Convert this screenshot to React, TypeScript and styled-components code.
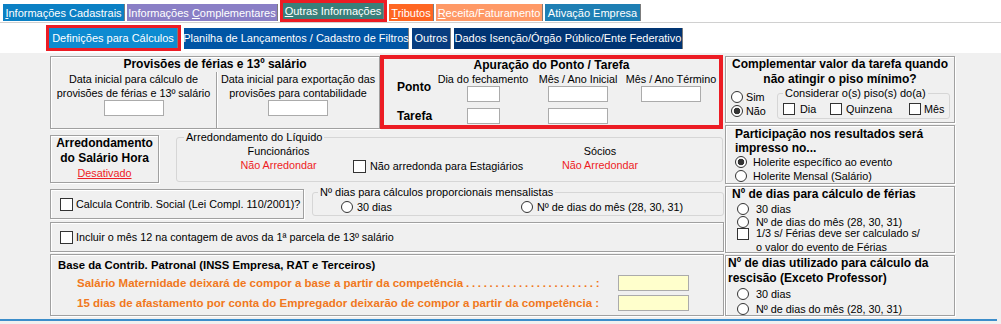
import styled, { createGlobalStyle } from 'styled-components';

const GlobalStyle = createGlobalStyle`
  html, body {
    margin: 0;
    padding: 0;
  }
  body {
    background: #f0f0f0;
    font-family: 'Liberation Sans', Arial, sans-serif;
    font-size: 10.8px;
    color: #000;
  }
`;

const Page = styled.div`
  width: 1001px;
  height: 324px;
  overflow: hidden;
`;

const Header = styled.div`
  height: 53px;
  background: #fff;
`;

const TopTabs = styled.div`
  display: flex;
  align-items: flex-end;
  gap: 2px;
  height: 22px;
  padding-left: 3px;
  border-bottom: 1px solid #d0d0d0;
`;

const SubTabs = styled.div`
  display: flex;
  align-items: center;
  gap: 3px;
  height: 26px;
  margin-top: 2px;
  padding-left: 46px;
`;

const Tab = styled.div<{ $bg: string; $w: number; $h: number; $mb?: number }>`
  box-sizing: border-box;
  flex: none;
  width: ${({ $w }) => $w}px;
  height: ${({ $h }) => $h}px;
  margin-bottom: ${({ $mb }) => $mb ?? 0}px;
  display: flex;
  align-items: center;
  justify-content: center;
  background: ${({ $bg }) => $bg};
  color: #fff;
  font-size: 11px;
  white-space: nowrap;
  border-right: 1px solid #7c7c7c;
`;

const Highlight = styled.div`
  box-sizing: border-box;
  flex: none;
  display: flex;
  border: 3px solid #ec1c24;
`;

const Content = styled.div`
  display: flex;
  gap: 1px;
  margin-top: 2px;
  padding-left: 50px;
`;

const LeftCol = styled.div`
  width: 674px;
  display: flex;
  flex-direction: column;
`;

const RightCol = styled.div`
  width: 230px;
  display: flex;
  flex-direction: column;
  gap: 2px;
  padding-top: 1px;
`;

const Row = styled.div<{ $h: number; $mt?: number }>`
  display: flex;
  align-items: flex-start;
  height: ${({ $h }) => $h}px;
  margin-top: ${({ $mt }) => $mt ?? 0}px;
`;

const Box = styled.div<{ $w?: number; $h: number; $mt?: number; $ml?: number }>`
  box-sizing: border-box;
  flex: none;
  width: ${({ $w }) => ($w ? `${$w}px` : '100%')};
  height: ${({ $h }) => $h}px;
  margin-top: ${({ $mt }) => $mt ?? 0}px;
  margin-left: ${({ $ml }) => $ml ?? 0}px;
  border: 1px solid #a0a0a0;
  box-shadow: inset 1px 1px 0 #fff, 1px 1px 0 #fff;
`;

const InlineBox = styled(Box)`
  display: flex;
  align-items: center;
  padding-left: 9px;
`;

const RedBox = styled.div`
  box-sizing: border-box;
  flex: none;
  width: 343px;
  height: 74px;
  border: 4px solid #ec1c24;
`;

const Group = styled.fieldset<{ $w: number; $h: number; $ml?: number }>`
  box-sizing: border-box;
  flex: none;
  width: ${({ $w }) => $w}px;
  height: ${({ $h }) => $h}px;
  margin: 0 0 0 ${({ $ml }) => $ml ?? 0}px;
  padding: 0;
  min-width: 0;
  border: 1px solid #d6d6d6;
  border-radius: 3px;
`;

const Legend = styled.legend<{ $ml?: number }>`
  margin-left: ${({ $ml }) => $ml ?? 6}px;
  padding: 0 2px;
  font-size: 11px;
  line-height: 13px;
`;

const Title = styled.div<{ $align?: string; $lh?: number; $pl?: number; $size?: number }>`
  font-size: ${({ $size }) => $size ?? 12}px;
  font-weight: bold;
  line-height: ${({ $lh }) => $lh ?? 15}px;
  text-align: ${({ $align }) => $align ?? 'center'};
  padding-left: ${({ $pl }) => $pl ?? 0}px;
  white-space: nowrap;
`;

const Input = styled.div<{ $w: number; $yellow?: boolean }>`
  box-sizing: border-box;
  flex: none;
  width: ${({ $w }) => $w}px;
  height: 16px;
  background: ${({ $yellow }) => ($yellow ? '#ffffcc' : '#fff')};
  border: 1px solid #ababab;
`;

/* Provisões */
const ProvCols = styled.div`
  display: grid;
  grid-template-columns: 165px 1fr;
  height: 56px;
`;

const ProvCol = styled.div<{ $divider?: boolean }>`
  display: flex;
  flex-direction: column;
  align-items: center;
  line-height: 14px;
  white-space: nowrap;
  border-left: ${({ $divider }) => ($divider ? '1px solid #a0a0a0' : 'none')};
  box-shadow: ${({ $divider }) => ($divider ? 'inset 1px 0 0 #fff' : 'none')};
`;

/* Apuração */
const ApurGrid = styled.div`
  display: grid;
  grid-template-columns: 52px 94px 96px 90px;
  grid-template-rows: 14px 16px 22px;
  align-items: center;
  justify-items: center;
`;

const ColHead = styled.div<{ $col: number }>`
  grid-row: 1;
  grid-column: ${({ $col }) => $col};
  line-height: 13px;
  white-space: nowrap;
`;

const RowLabel = styled.div<{ $row: string; $self?: string }>`
  grid-row: ${({ $row }) => $row};
  grid-column: 1;
  justify-self: start;
  align-self: ${({ $self }) => $self ?? 'center'};
  padding-left: 13px;
  font-size: 12px;
  font-weight: bold;
  line-height: 16px;
`;

const Cell = styled.div<{ $row: number; $col: number }>`
  grid-row: ${({ $row }) => $row};
  grid-column: ${({ $col }) => $col};
  align-self: end;
`;

/* Arredondamento */
const RedLink = styled.div<{ $u?: boolean }>`
  color: #ee1c24;
  line-height: 14px;
  text-align: center;
  text-decoration: ${({ $u }) => ($u ? 'underline' : 'none')};
  white-space: nowrap;
`;

const LiqRow = styled.div`
  display: flex;
  align-items: flex-start;
`;

const LiqItem = styled.div<{ $w: number; $ml?: number; $mt?: number }>`
  width: ${({ $w }) => $w}px;
  margin-left: ${({ $ml }) => $ml ?? 0}px;
  margin-top: ${({ $mt }) => $mt ?? 0}px;
  line-height: 14px;
  text-align: center;
  white-space: nowrap;
`;

const Check = styled.span<{ $size?: number }>`
  box-sizing: border-box;
  flex: none;
  display: inline-block;
  width: ${({ $size }) => $size ?? 13}px;
  height: ${({ $size }) => $size ?? 13}px;
  border: 1px solid #333;
  background: #fff;
`;

const Radio = styled.span<{ $on?: boolean }>`
  box-sizing: border-box;
  flex: none;
  display: inline-block;
  width: 12px;
  height: 12px;
  border: 1px solid #333;
  border-radius: 50%;
  background: ${({ $on }) =>
    $on ? 'radial-gradient(circle, #333 0 3px, #fff 3.6px)' : '#fff'};
`;

const Option = styled.div<{ $gap?: number; $lh?: number; $w?: number }>`
  display: flex;
  align-items: center;
  gap: ${({ $gap }) => $gap ?? 4}px;
  height: ${({ $lh }) => $lh ?? 14}px;
  width: ${({ $w }) => ($w ? `${$w}px` : 'auto')};
  flex: none;
  white-space: nowrap;
`;

const OptionRow = styled.div<{ $pl?: number; $mt?: number; $top?: boolean }>`
  display: flex;
  align-items: ${({ $top }) => ($top ? 'flex-start' : 'center')};
  padding-left: ${({ $pl }) => $pl ?? 0}px;
  margin-top: ${({ $mt }) => $mt ?? 0}px;
`;

/* Base da contribuição */
const BaseTitle = styled.div`
  padding: 3px 0 0 7px;
  font-size: 11.3px;
  font-weight: bold;
  line-height: 14px;
`;

const BaseLine = styled.div<{ $mt: number }>`
  display: flex;
  align-items: center;
  gap: 14px;
  margin-top: ${({ $mt }) => $mt}px;
  padding-left: 26px;
`;

const BaseLabel = styled.div`
  width: 527px;
  display: flex;
  color: #f07820;
  font-size: 11.5px;
  font-weight: bold;
  white-space: nowrap;
`;

const Leader = styled.span`
  padding-left: 3px;
  letter-spacing: 2.7px;
`;

/* Right column */
const SplitRow = styled.div`
  display: flex;
  align-items: flex-start;
  padding-left: 5px;
`;

const RadioCol = styled.div`
  width: 46px;
  flex: none;
  padding-top: 3px;
`;

const Wrap = styled.div`
  margin-left: 7px;
  line-height: 14px;
  white-space: nowrap;
`;

const SmallCheck = styled(Check)`
  margin-top: 2px;
`;

const Footer = styled.div`
  width: 997px;
  height: 2px;
  margin-top: 3px;
  background: #3c8dca;
`;

export default function App() {
  return (
    <Page>
      <GlobalStyle />
      <Header>
        <TopTabs>
          <Tab $bg="#0b80c4" $w={122} $h={17} $mb={1}>
            <span><u>I</u>nformações Cadastrais</span>
          </Tab>
          <Tab $bg="#8a7fc6" $w={151} $h={17} $mb={1}>
            <span>Informações <u>C</u>omplementares</span>
          </Tab>
          <Highlight>
            <Tab $bg="#3a7f7a" $w={101} $h={16}>
              <span><u>O</u>utras Informações</span>
            </Tab>
          </Highlight>
          <Tab $bg="#ff6622" $w={45} $h={17} $mb={1}>
            <span><u>T</u>ributos</span>
          </Tab>
          <Tab $bg="#ff9966" $w={107} $h={17} $mb={1}>
            <span><u>R</u>eceita/Faturamento</span>
          </Tab>
          <Tab $bg="#1e7fb4" $w={96} $h={17} $mb={1}>
            Ativação Empresa
          </Tab>
        </TopTabs>
        <SubTabs>
          <Highlight>
            <Tab $bg="#0d8bd1" $w={129} $h={20}>
              Definições para Cálculos
            </Tab>
          </Highlight>
          <Tab $bg="#0055a5" $w={225} $h={21}>
            Planilha de Lançamentos / Cadastro de Filtros
          </Tab>
          <Tab $bg="#073d80" $w={39} $h={21}>
            Outros
          </Tab>
          <Tab $bg="#003473" $w={229} $h={21}>
            Dados Isenção/Órgão Público/Ente Federativo
          </Tab>
        </SubTabs>
      </Header>

      <Content>
        <LeftCol>
          <Row $h={74}>
            <Box $w={330} $h={73} $mt={1}>
              <Title>Provisões de férias e 13º salário</Title>
              <ProvCols>
                <ProvCol>
                  <span>Data inicial para cálculo de</span>
                  <span>provisões de férias e 13º salário</span>
                  <Input $w={60} />
                </ProvCol>
                <ProvCol $divider>
                  <span>Data inicial para exportação das</span>
                  <span>provisões para contabilidade</span>
                  <Input $w={60} />
                </ProvCol>
              </ProvCols>
            </Box>
            <RedBox>
              <Title $lh={13}>Apuração do Ponto / Tarefa</Title>
              <ApurGrid>
                <ColHead $col={2}>Dia do fechamento</ColHead>
                <ColHead $col={3}>Mês / Ano Inicial</ColHead>
                <ColHead $col={4}>Mês / Ano Término</ColHead>
                <RowLabel $row="1 / 3">Ponto</RowLabel>
                <Cell $row={2} $col={2}><Input $w={33} /></Cell>
                <Cell $row={2} $col={3}><Input $w={60} /></Cell>
                <Cell $row={2} $col={4}><Input $w={60} /></Cell>
                <RowLabel $row="3" $self="end">Tarefa</RowLabel>
                <Cell $row={3} $col={2}><Input $w={33} /></Cell>
                <Cell $row={3} $col={3}><Input $w={60} /></Cell>
              </ApurGrid>
            </RedBox>
          </Row>

          <Row $h={54} $mt={2}>
            <Box $w={109} $h={48} $mt={4}>
              <Title>
                Arredondamento
                <br />
                do Salário Hora
              </Title>
              <RedLink $u>Desativado</RedLink>
            </Box>
            <Group $w={547} $h={51} $ml={17}>
              <Legend $ml={7}>Arredondamento do Líquido</Legend>
              <LiqRow>
                <LiqItem $w={147} $ml={28}>
                  <div>Funcionários</div>
                  <RedLink>Não Arredondar</RedLink>
                </LiqItem>
                <LiqItem $w={202} $ml={1} $mt={15}>
                  <Option $gap={4}>
                    <Check />
                    Não arredonda para Estagiários
                  </Option>
                </LiqItem>
                <LiqItem $w={90}>
                  <div>Sócios</div>
                  <RedLink>Não Arredondar</RedLink>
                </LiqItem>
              </LiqRow>
            </Group>
          </Row>

          <Row $h={35} $mt={1}>
            <InlineBox $w={254} $h={30} $mt={3}>
              <Option $gap={3}>
                <Check />
                Calcula Contrib. Social (Lei Compl. 110/2001)?
              </Option>
            </InlineBox>
            <Group $w={412} $h={30} $ml={8}>
              <Legend $ml={5}>Nº dias para cálculos proporcionais mensalistas</Legend>
              <OptionRow $pl={28} $mt={1}>
                <Option $gap={4} $w={180}>
                  <Radio />
                  30 dias
                </Option>
                <Option $gap={4}>
                  <Radio />
                  Nº de dias do mês (28, 30, 31)
                </Option>
              </OptionRow>
            </Group>
          </Row>

          <Row $h={30} $mt={1}>
            <InlineBox $h={30}>
              <Option $gap={3}>
                <Check />
                Incluir o mês 12 na contagem de avos da 1ª parcela de 13º salário
              </Option>
            </InlineBox>
          </Row>

          <Row $h={62} $mt={2}>
            <Box $h={62}>
              <BaseTitle>Base da Contrib. Patronal (INSS Empresa, RAT e Terceiros)</BaseTitle>
              <BaseLine $mt={3}>
                <BaseLabel>
                  <span>Salário Maternidade deixará de compor a base a partir da competência</span>
                  <Leader>......................</Leader>
                  <span>:</span>
                </BaseLabel>
                <Input $w={71} $yellow />
              </BaseLine>
              <BaseLine $mt={4}>
                <BaseLabel>
                  15 dias de afastamento por conta do Empregador deixarão de compor a partir da competência :
                </BaseLabel>
                <Input $w={71} $yellow />
              </BaseLine>
            </Box>
          </Row>
        </LeftCol>

        <RightCol>
          <Box $h={67}>
            <Title>
              Complementar valor da tarefa quando
              <br />
              não atingir o piso mínimo?
            </Title>
            <SplitRow>
              <RadioCol>
                <Option $gap={3}>
                  <Radio />
                  Sim
                </Option>
                <Option $gap={3}>
                  <Radio $on />
                  Não
                </Option>
              </RadioCol>
              <Group $w={173} $h={32}>
                <Legend $ml={5}>Considerar o(s) piso(s) do(a)</Legend>
                <OptionRow $pl={5} $mt={2}>
                  <Option $gap={5} $w={47}>
                    <Check $size={12} />
                    Dia
                  </Option>
                  <Option $gap={4} $w={79}>
                    <Check $size={12} />
                    Quinzena
                  </Option>
                  <Option $gap={3}>
                    <Check $size={12} />
                    Mês
                  </Option>
                </OptionRow>
              </Group>
            </SplitRow>
          </Box>

          <Box $h={59}>
            <Title $align="left" $lh={14} $pl={9} style={{ paddingTop: 1 }}>
              Participação nos resultados será
              <br />
              impresso no...
            </Title>
            <OptionRow $pl={9}>
              <Option $gap={6}>
                <Radio $on />
                Holerite específico ao evento
              </Option>
            </OptionRow>
            <OptionRow $pl={9}>
              <Option $gap={6}>
                <Radio />
                Holerite Mensal (Salário)
              </Option>
            </OptionRow>
          </Box>

          <Box $h={67}>
            <Title $align="left" $lh={14} $pl={6}>
              Nº de dias para cálculo de férias
            </Title>
            <OptionRow $pl={11} $mt={1}>
              <Option $gap={7} $lh={13}>
                <Radio />
                30 dias
              </Option>
            </OptionRow>
            <OptionRow $pl={11}>
              <Option $gap={7} $lh={13}>
                <Radio />
                Nº de dias do mês (28, 30, 31)
              </Option>
            </OptionRow>
            <OptionRow $pl={11} $mt={-2} $top>
              <SmallCheck $size={12} />
              <Wrap>
                1/3 s/ Férias deve ser calculado s/
                <br />
                o valor do evento de Férias
              </Wrap>
            </OptionRow>
          </Box>

          <Box $h={61}>
            <Title $align="left" $lh={15} $pl={2}>
              Nº de dias utilizado para cálculo da
              <br />
              rescisão (Exceto Professor)
            </Title>
            <OptionRow $pl={11}>
              <Option $gap={7} $lh={15}>
                <Radio />
                30 dias
              </Option>
            </OptionRow>
            <OptionRow $pl={11}>
              <Option $gap={7} $lh={15}>
                <Radio />
                Nº de dias do mês (28, 30, 31)
              </Option>
            </OptionRow>
          </Box>
        </RightCol>
      </Content>
      <Footer />
    </Page>
  );
}
